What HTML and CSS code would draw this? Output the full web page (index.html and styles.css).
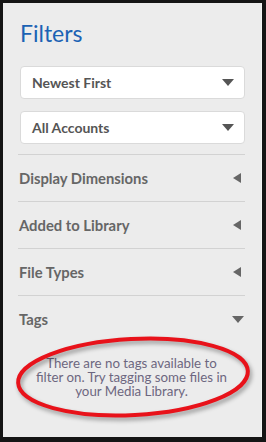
FILE: index.html
```html
<!DOCTYPE html>
<html lang="en">
<head>
    <meta charset="UTF-8">
    <title>Filters</title>
    <link rel="stylesheet" href="styles.css">
</head>
<body>
    <div class="panel">
        <h1>Filters</h1>

        <div class="select">
            <span>Newest First</span>
            <span class="caret-down"></span>
        </div>
        <div class="select">
            <span>All Accounts</span>
            <span class="caret-down"></span>
        </div>

        <div class="filter-list">
            <div class="filter-row">
                <span>Display Dimensions</span>
                <span class="caret-left"></span>
            </div>
            <div class="filter-row">
                <span>Added to Library</span>
                <span class="caret-left"></span>
            </div>
            <div class="filter-row">
                <span>File Types</span>
                <span class="caret-left"></span>
            </div>
            <div class="filter-row open">
                <span>Tags</span>
                <span class="caret-down small"></span>
            </div>
            <div class="tags-body">
                <p class="empty-note">There are no tags available to filter on. Try tagging some files in your Media Library.</p>
                <svg class="highlight-ring" width="244" height="92" viewBox="0 0 244 92">
                    <ellipse cx="122" cy="46" rx="115" ry="38" transform="rotate(-3 122 46)" fill="none" stroke="#e8121a" stroke-width="4"/>
                </svg>
            </div>
        </div>
    </div>
</body>
</html>
```

FILE: styles.css
```css
:root {
    --panel-bg: #ececec;
    --text-color: #666;
    --title-color: #1b62b4;
    --line-color: #d2d2d2;
}

body {
    margin: 0;
    background-color: #151515;
    font-family: 'Lato', sans-serif;
}

.panel {
    box-sizing: border-box;
    margin: 3px 4px 5px 3px;
    height: 434px;
    padding: 15px 16px 0 15px;
    background-color: var(--panel-bg);
    border-right: 1px solid #f4f4f4;
}

h1 {
    margin: 0 0 0 2px;
    font-size: 23px;
    font-weight: 400;
    color: var(--title-color);
    line-height: 30px;
}

.select {
    box-sizing: border-box;
    display: flex;
    justify-content: space-between;
    align-items: center;
    height: 33px;
    margin: 18px 0 0 2px;
    padding: 0 10px 0 11px;
    background-color: white;
    border: 1px solid #dadada;
    border-radius: 4px;
    font-size: 14px;
    font-weight: 700;
    color: #555;
}

.select + .select {
    margin-top: 12px;
}

.caret-down {
    width: 0;
    height: 0;
    border-left: 6px solid transparent;
    border-right: 6px solid transparent;
    border-top: 7px solid #555;
}

.caret-down.small {
    border-top-color: #666;
}

.caret-left {
    width: 0;
    height: 0;
    border-top: 5.5px solid transparent;
    border-bottom: 5.5px solid transparent;
    border-right: 8px solid #666;
    margin-right: 3px;
}

.filter-list {
    margin-top: 10px;
}

.filter-row {
    display: flex;
    justify-content: space-between;
    align-items: center;
    height: 46px;
    padding: 0 1px 0 1px;
    border-top: 1px solid var(--line-color);
    font-size: 14.8px;
    font-weight: 700;
    color: var(--text-color);
}

.tags-body {
    position: relative;
    padding-top: 14px;
}

.empty-note {
    margin: 0 auto;
    width: 196px;
    font-size: 13.3px;
    line-height: 14px;
    text-align: center;
    color: #6c6780;
}

.highlight-ring {
    position: absolute;
    left: -7px;
    top: -11px;
    filter: drop-shadow(2px 3px 2px rgba(0, 0, 0, 0.35));
}
```
